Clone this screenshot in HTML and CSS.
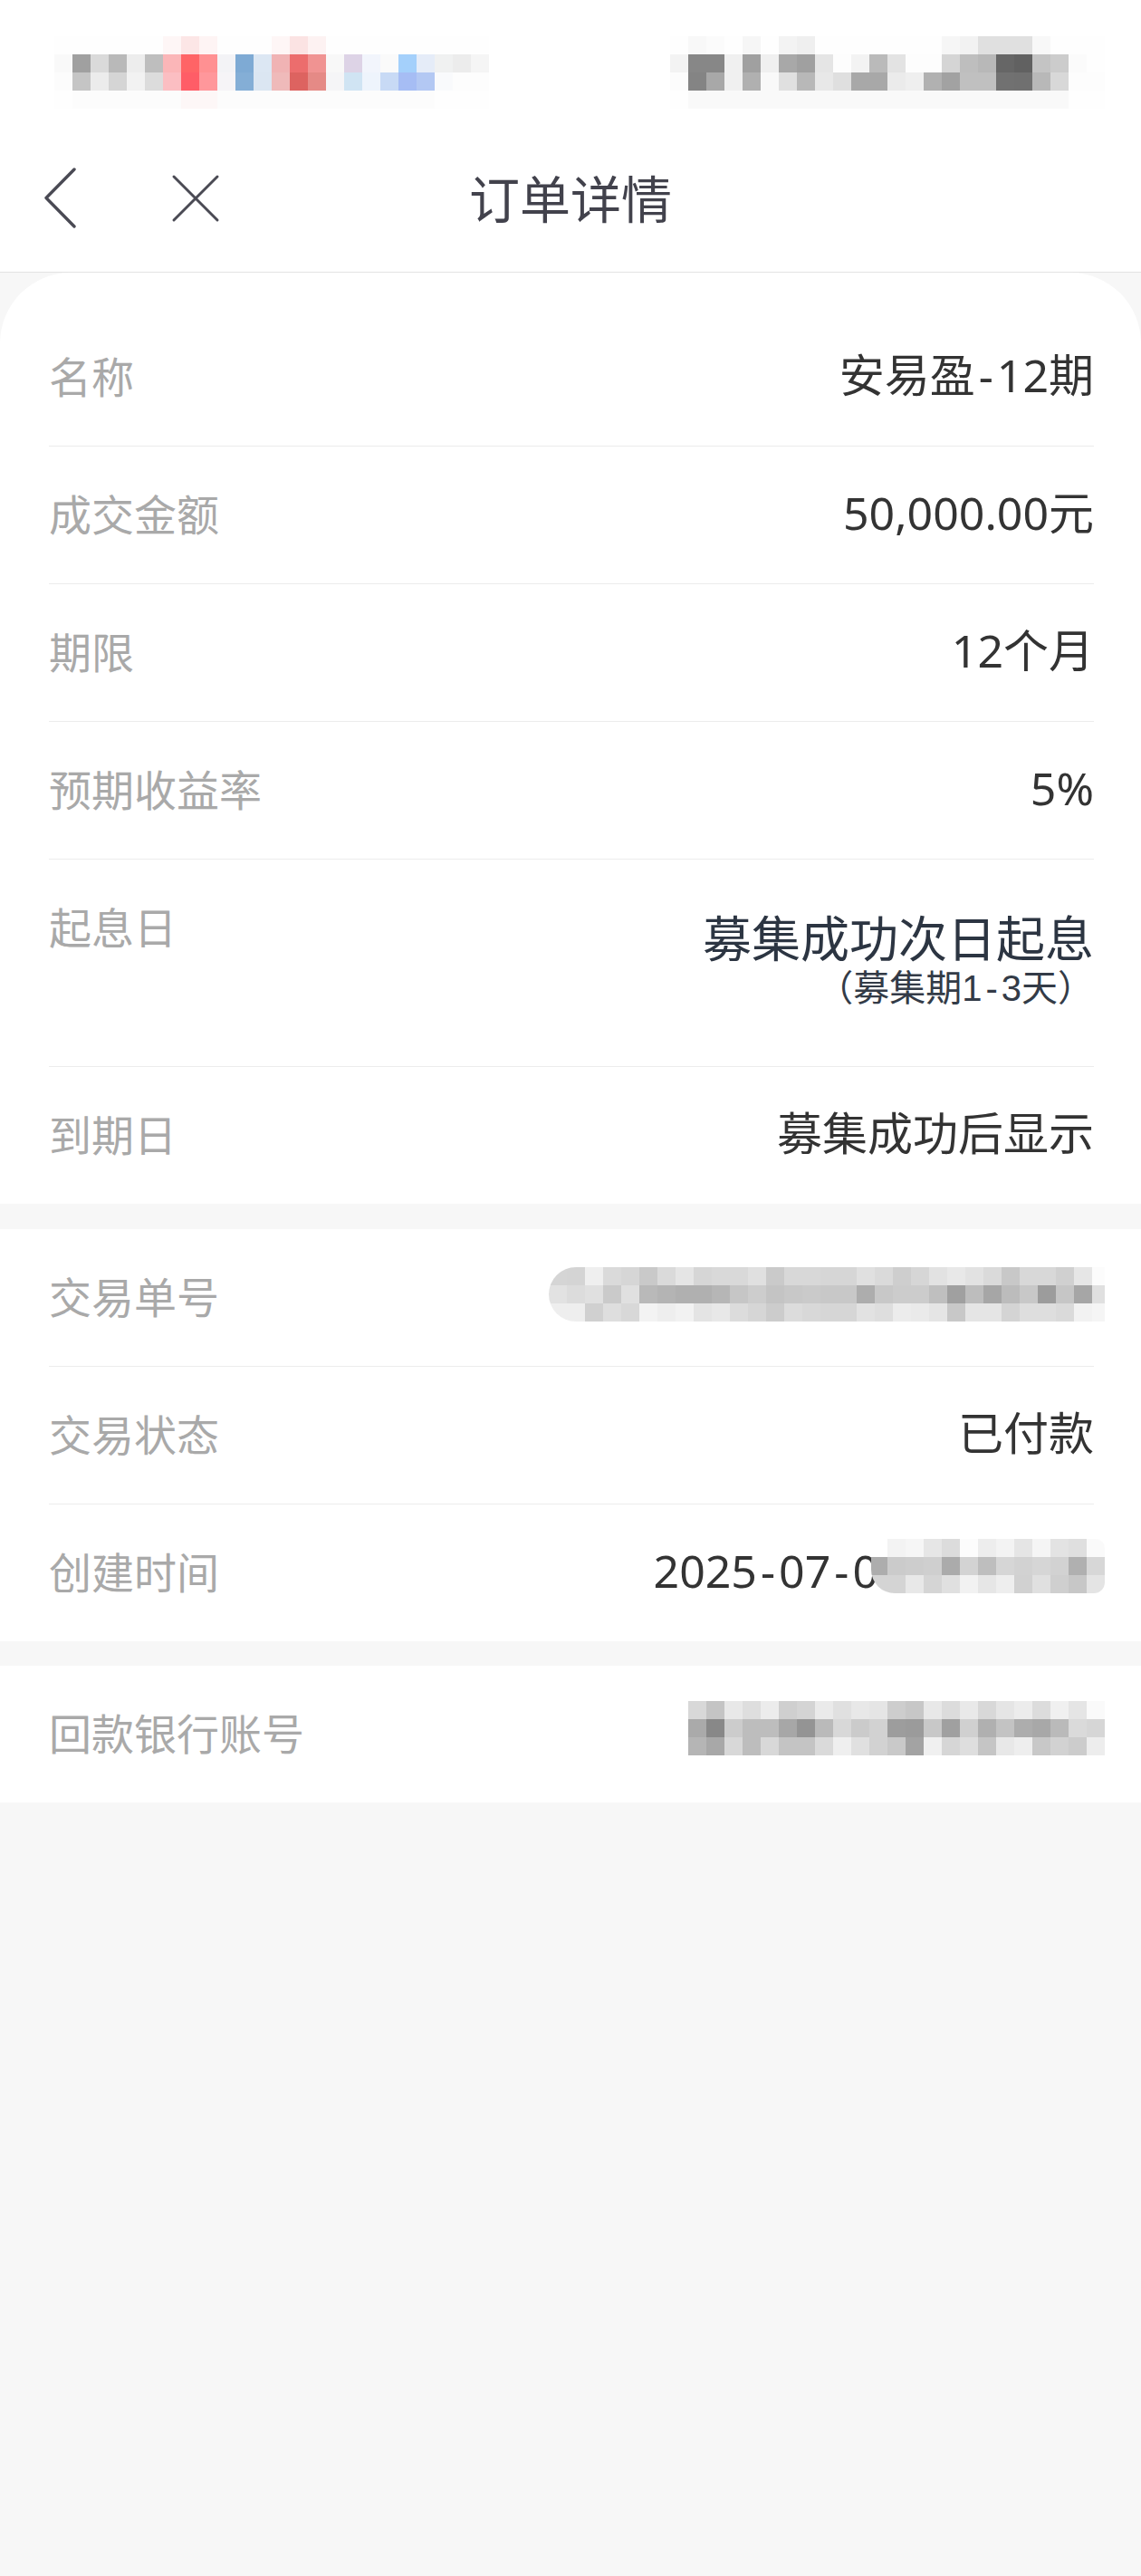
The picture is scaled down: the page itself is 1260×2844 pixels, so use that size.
FILE: index.html
```html
<!DOCTYPE html>
<html lang="zh-CN">
<head>
<meta charset="utf-8">
<title>订单详情</title>
<link rel="stylesheet" href="styles.css">
</head>
<body>
<header class="top">
  <div class="statusbar">
    <div class="mosaic sb-left">
      <div class="mr r0"></div><div class="mr r1"></div><div class="mr r2"></div><div class="mr r3"></div>
    </div>
    <div class="mosaic sb-right">
      <div class="mr r0"></div><div class="mr r1"></div><div class="mr r2"></div><div class="mr r3"></div>
    </div>
  </div>
  <nav class="navbar">
    <div class="nav-left">
      <svg class="icon-back" width="40" height="70" viewBox="0 0 40 70"><polyline points="36,2 5,33.5 36,65" fill="none" stroke="#4a4a54" stroke-width="3.4" stroke-linecap="round" stroke-linejoin="round"/></svg>
      <svg class="icon-close" width="56" height="56" viewBox="0 0 56 56"><path d="M4 3 L52 51 M52 3 L4 51" fill="none" stroke="#4a4a54" stroke-width="3" stroke-linecap="round"/></svg>
    </div>
    <h1 class="title">订单详情</h1>
    <div class="nav-right"></div>
  </nav>
</header>

<main class="page">
  <section class="card card-first">
    <div class="row"><span class="label">名称</span><span class="value">安易盈<span class="hy">-</span>12期</span></div>
    <div class="row"><span class="label">成交金额</span><span class="value">50,000.00元</span></div>
    <div class="row"><span class="label">期限</span><span class="value">12个月</span></div>
    <div class="row"><span class="label">预期收益率</span><span class="value">5%</span></div>
    <div class="row row-top">
      <span class="label">起息日</span>
      <div class="value-block">
        <div class="value-big">募集成功次日起息</div>
        <div class="value-sub">（募集期1<span class="hy">-</span>3天）</div>
      </div>
    </div>
    <div class="row"><span class="label">到期日</span><span class="value">募集成功后显示</span></div>
  </section>

  <section class="card">
    <div class="row">
      <span class="label">交易单号</span>
      <div class="mosaic mz-trade"><div class="mr t1"></div><div class="mr t2"></div><div class="mr t3"></div></div>
    </div>
    <div class="row"><span class="label">交易状态</span><span class="value">已付款</span></div>
    <div class="row">
      <span class="label">创建时间</span>
      <div class="value date-value">
        <span>2025<span class="hy">-</span>07<span class="hy">-</span>0</span>
        <div class="mosaic mz-date"><div class="mr d1"></div><div class="mr d2"></div><div class="mr d3"></div></div>
      </div>
    </div>
  </section>

  <section class="card">
    <div class="row">
      <span class="label">回款银行账号</span>
      <div class="mosaic mz-bank"><div class="mr b1"></div><div class="mr b2"></div><div class="mr b3"></div></div>
    </div>
  </section>
</main>
</body>
</html>
```

FILE: styles.css
```css
html { background: #f7f7f7; }
body {
  margin: 0;
  width: 1260px;
  min-height: 2844px;
  background: #f7f7f7;
  font-family: "Noto Sans", "Noto Sans CJK SC", sans-serif;
}

/* ---------- header ---------- */
.top {
  background: #ffffff;
  border-bottom: 1px solid #e3e3e3;
}
.statusbar {
  height: 140px;
  display: flex;
  align-items: flex-start;
  padding-top: 40px;
  box-sizing: border-box;
}
.mosaic { display: flex; flex-direction: column; flex: none; overflow: hidden; }
.mr { height: 20px; }

.sb-left { width: 480px; margin-left: 60px; }
.sb-right { width: 480px; margin-left: 200px; }

.sb-left .r0 { background: linear-gradient(90deg, #fefefe 0 120px, #fef6f6 0 140px, #fce6e6 0 160px, #fef4f4 0 180px, #fefefe 0 240px, #fef6f6 0 260px, #fbe3e3 0 280px, #fdf2f2 0 300px, #fefefe 0 480px); }
.sb-left .r1 { background: linear-gradient(90deg, #f9f9f9 0 20px, #a0a0a0 0 40px, #dadada 0 60px, #b9b9b9 0 80px, #ededed 0 100px, #bebebe 0 120px, #fbb6b8 0 140px, #ff6466 0 160px, #ff9092 0 180px, #f3f3f6 0 200px, #7eaad4 0 220px, #dce7f3 0 240px, #f0b3b4 0 260px, #ec6d6d 0 280px, #f09392 0 300px, #f8f8f8 0 320px, #ddd3e6 0 340px, #f2f5fc 0 360px, #fafafa 0 380px, #a4d0fb 0 400px, #e5ecf8 0 420px, #f0f1f1 0 440px, #ececec 0 460px, #f5f5f5 0 480px); }
.sb-left .r2 { background: linear-gradient(90deg, #fcfcfc 0 20px, #c5c5c5 0 40px, #ececec 0 60px, #d5d5d5 0 80px, #f2f2f2 0 100px, #dcdcdc 0 120px, #fbbec2 0 140px, #ff5d67 0 160px, #ff979b 0 180px, #f6f4f7 0 200px, #84aed6 0 220px, #dbe6f2 0 240px, #efbaba 0 260px, #dd6360 0 280px, #e58a86 0 300px, #f5f5f7 0 320px, #d0e4f3 0 340px, #eef4fc 0 360px, #c8daf5 0 380px, #a6bdf4 0 400px, #b3c8f3 0 420px, #f9fafc 0 440px, #fdfdfd 0 480px); }
.sb-left .r3 { background: linear-gradient(90deg, #fefefe 0 20px, #fcfcfc 0 140px, #fdf7f7 0 180px, #fcfcfc 0 420px, #fefefe 0 480px); }

.sb-right .r0 { background: linear-gradient(90deg, #fefefe 0 20px, #f8f8f8 0 40px, #fbfbfb 0 60px, #fefefe 0 80px, #f6f6f6 0 100px, #fefefe 0 120px, #f3f3f3 0 140px, #efefef 0 160px, #fefefe 0 300px, #f6f6f6 0 320px, #f2f2f2 0 340px, #e0e0e0 0 400px, #f8f8f8 0 420px, #fefefe 0 480px); }
.sb-right .r1 { background: linear-gradient(90deg, #f3f3f3 0 20px, #878787 0 60px, #f0f0f0 0 80px, #a0a0a0 0 100px, #f0f0f0 0 120px, #a8a8a8 0 140px, #a0a0a0 0 160px, #e5e5e5 0 180px, #fdfdfd 0 200px, #f3f3f3 0 220px, #bababa 0 240px, #e3e3e3 0 260px, #fdfdfd 0 300px, #d5d5d5 0 320px, #bebebe 0 340px, #b8b8b8 0 360px, #666666 0 380px, #616161 0 400px, #c4c4c4 0 420px, #cccccc 0 440px, #fbfbfb 0 460px, #fefefe 0 480px); }
.sb-right .r2 { background: linear-gradient(90deg, #fcfcfc 0 20px, #848484 0 40px, #a8a8a8 0 60px, #f0f0f0 0 80px, #b0b0b0 0 100px, #f9f9f9 0 120px, #e0e0e0 0 140px, #b8b8b8 0 160px, #e8e8e8 0 180px, #dfdfdf 0 200px, #a8a8a8 0 240px, #ebebeb 0 260px, #efefef 0 280px, #b1b1b1 0 300px, #a2a2a2 0 320px, #c0c0c0 0 360px, #717171 0 380px, #707070 0 400px, #b8b8b8 0 420px, #d8d8d8 0 440px, #fdfdfd 0 480px); }
.sb-right .r3 { background: linear-gradient(90deg, #fefefe 0 20px, #f9f9f9 0 440px, #fefefe 0 480px); }

.navbar {
  height: 160px;
  display: grid;
  grid-template-columns: 1fr auto 1fr;
  align-items: center;
}
.nav-left { display: flex; align-items: center; }
.icon-back { margin-left: 46px; display: block; }
.icon-close { margin-left: 102px; display: block; }
.title {
  margin: 0;
  padding-bottom: 6px;
  font-size: 56px;
  font-weight: 400;
  line-height: 1;
  color: #42424c;
  font-family: "Noto Sans CJK SC", sans-serif;
}

/* ---------- cards ---------- */
.card {
  background: #ffffff;
  padding: 0 52px 0 54px;
  margin-top: 28px;
}
.card-first {
  margin-top: 0;
  padding-top: 40px;
  border-radius: 78px 78px 0 0;
}
.card + .card + .card { margin-top: 27px; }

.row {
  display: flex;
  justify-content: space-between;
  align-items: center;
  padding: 42px 0 47px;
  border-bottom: 1px solid #ececec;
  line-height: 62px;
}
.row:last-child { border-bottom: 0; }
.row-top { align-items: flex-start; }

.label {
  font-size: 47px;
  color: #a9a9a9;
  font-family: "Noto Sans CJK SC", sans-serif;
}
.value {
  font-size: 50px;
  color: #333333;
  text-align: right;
}
.hy { padding: 0 4px; }
.value-block {
  text-align: right;
  padding-top: 17px;
  padding-bottom: 17px;
  color: #2c3542;
  font-family: "Liberation Sans", "Noto Sans CJK SC", sans-serif;
}
.value-big { font-size: 54px; line-height: 60px; }
.value-sub { font-size: 40px; line-height: 44px; padding-top: 1px; color: #333b47; }

/* masked values */
.mz-trade {
  width: 614px;
  margin-right: -12px;
  margin-top: -2px;
  border-radius: 30px 0 0 30px;
}
.mz-trade .t1 { background: linear-gradient(90deg, #d5d5d5 0 20px, #d4d4d4 0 40px, #efefef 0 60px, #dadada 0 80px, #d6d6d6 0 100px, #c9c9c9 0 120px, #dadada 0 140px, #e5e5e5 0 160px, #d6d6d6 0 180px, #d9d9d9 0 220px, #e0e0e0 0 240px, #cacaca 0 260px, #d8d8d8 0 300px, #d6d6d6 0 340px, #e0e0e0 0 360px, #dadada 0 380px, #cecece 0 400px, #d6d6d6 0 420px, #e2e2e2 0 440px, #e8e8e8 0 460px, #e2e2e2 0 480px, #dadada 0 500px, #c8c8c8 0 520px, #d8d8d8 0 560px, #d0d0d0 0 580px, #e6e6e6 0 600px, #fcfcfc 0 620px); }
.mz-trade .t2 { background: linear-gradient(90deg, #e2e2e2 0 20px, #dcdcdc 0 40px, #e0e0e0 0 60px, #cacaca 0 80px, #e0e0e0 0 100px, #b9b9b9 0 120px, #b4b4b4 0 140px, #b0b0b0 0 180px, #b6b6b6 0 200px, #c6c6c6 0 220px, #cdcdcd 0 240px, #c4c4c4 0 260px, #c8c8c8 0 280px, #cacaca 0 300px, #c8c8c8 0 340px, #adadad 0 360px, #c8c8c8 0 380px, #cccccc 0 420px, #bfbfbf 0 440px, #a0a0a0 0 460px, #bdbdbd 0 480px, #a6a6a6 0 500px, #bcbcbc 0 520px, #c8c8c8 0 540px, #9c9c9c 0 560px, #c6c6c6 0 580px, #a6a6a6 0 600px, #e0e0e0 0 620px); }
.mz-trade .t3 { background: linear-gradient(90deg, #eeeeee 0 40px, #d0d0d0 0 60px, #dedede 0 80px, #d8d8d8 0 100px, #f3f3f3 0 120px, #eeeeee 0 140px, #f2f2f2 0 160px, #e4e4e4 0 180px, #e8e8e8 0 200px, #dcdcdc 0 220px, #d6d6d6 0 240px, #cccccc 0 260px, #dcdcdc 0 280px, #d8d8d8 0 300px, #d6d6d6 0 340px, #e2e2e2 0 360px, #dedede 0 380px, #ececec 0 400px, #eaeaea 0 420px, #e5e5e5 0 440px, #c8c8c8 0 460px, #e5e5e5 0 500px, #d4d4d4 0 520px, #dedede 0 560px, #dadada 0 580px, #f2f2f2 0 600px, #f5f5f5 0 620px); }

.date-value { display: flex; align-items: flex-start; }
.mz-date {
  width: 258px;
  margin-left: -8px;
  margin-right: -12px;
  margin-top: -4px;
  border-radius: 0 10px 12px 26px;
}
.mz-date .d1 { background: linear-gradient(90deg, #ffffff 0 18px, #f3f3f3 0 38px, #f6f6f6 0 58px, #e6e6e6 0 78px, #dcdcdc 0 98px, #fcfcfc 0 118px, #ededed 0 138px, #f3f3f3 0 158px, #e5e5e5 0 178px, #f5f5f5 0 198px, #e3e3e3 0 218px, #dfdfdf 0 238px, #fafafa 0 258px); }
.mz-date .d2 { background: linear-gradient(90deg, #adadad 0 18px, #cbcbcb 0 38px, #cdcdcd 0 58px, #cfcfcf 0 78px, #ababab 0 98px, #d3d3d3 0 118px, #bebebe 0 138px, #d6d6d6 0 158px, #d2d2d2 0 178px, #d6d6d6 0 198px, #d2d2d2 0 218px, #b0b0b0 0 238px, #d7d7d7 0 258px); }
.mz-date .d3 { background: linear-gradient(90deg, #d4d4d4 0 38px, #e8e8e8 0 58px, #d5d5d5 0 78px, #e0e0e0 0 98px, #f2f2f2 0 118px, #e6e6e6 0 138px, #eeeeee 0 158px, #d1d1d1 0 178px, #e0e0e0 0 198px, #cfcfcf 0 218px, #c7c7c7 0 238px, #e4e4e4 0 258px); }

.mz-bank {
  width: 460px;
  margin-right: -12px;
  margin-top: -8px;
}
.mz-bank .b1 { background: linear-gradient(90deg, #d8d8d8 0 20px, #c4c4c4 0 40px, #e8e8e8 0 60px, #dedede 0 80px, #ececec 0 100px, #cfcfcf 0 120px, #d4d4d4 0 140px, #eaeaea 0 160px, #e0e0e0 0 180px, #e8e8e8 0 200px, #e5e5e5 0 220px, #cdcdcd 0 240px, #c7c7c7 0 260px, #e8e8e8 0 280px, #dcdcdc 0 300px, #e9e9e9 0 320px, #d8d8d8 0 340px, #e5e5e5 0 360px, #ececec 0 380px, #dcdcdc 0 400px, #f0f0f0 0 420px, #e5e5e5 0 440px, #fafafa 0 460px); }
.mz-bank .b2 { background: linear-gradient(90deg, #aaaaaa 0 20px, #888888 0 40px, #cccccc 0 60px, #bdbdbd 0 100px, #a7a7a7 0 120px, #949494 0 140px, #bababa 0 160px, #d8d8d8 0 180px, #cbcbcb 0 200px, #d2d2d2 0 220px, #9d9d9d 0 240px, #9b9b9b 0 260px, #c8c8c8 0 280px, #a0a0a0 0 300px, #d0d0d0 0 320px, #b0b0b0 0 340px, #c3c3c3 0 360px, #adadad 0 380px, #a8a8a8 0 400px, #bababa 0 420px, #dadada 0 440px, #d6d6d6 0 460px); }
.mz-bank .b3 { background: linear-gradient(90deg, #b5b5b5 0 20px, #a8a8a8 0 40px, #d8d8d8 0 60px, #bdbdbd 0 80px, #d8d8d8 0 100px, #c4c4c4 0 140px, #dadada 0 160px, #efefef 0 180px, #e0e0e0 0 200px, #d2d2d2 0 220px, #c9c9c9 0 240px, #a3a3a3 0 260px, #f0f0f0 0 280px, #d6d6d6 0 300px, #dedede 0 320px, #c5c5c5 0 340px, #e8e8e8 0 360px, #eeeeee 0 380px, #c8c8c8 0 400px, #d2d2d2 0 420px, #cccccc 0 440px, #ededed 0 460px); }
```
